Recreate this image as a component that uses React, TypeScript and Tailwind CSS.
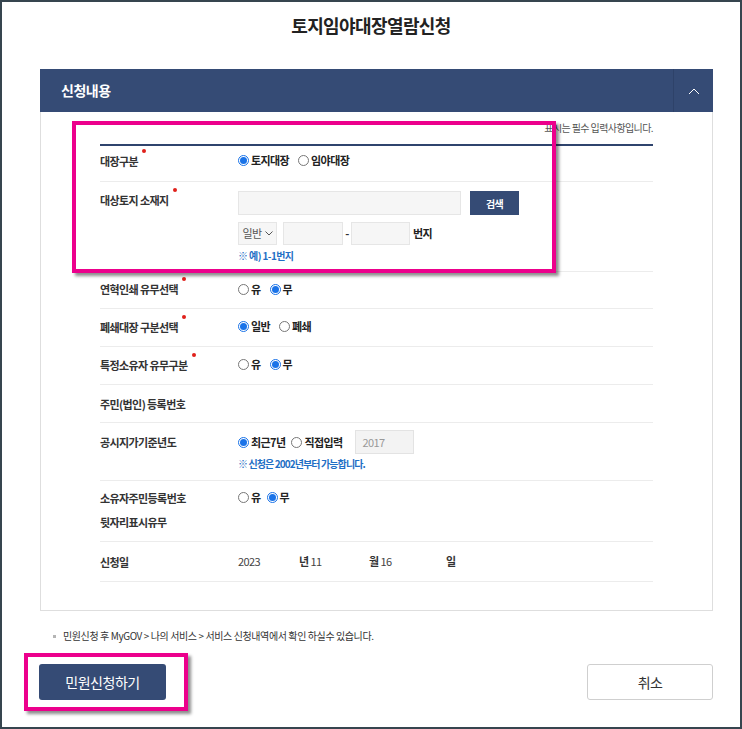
import React from "react";

const navy = "bg-[#354b75]";

function Dot() {
  return <span className="ml-[4px] mt-[-3px] inline-block h-[4px] w-[4px] self-start rounded-full bg-[#e0201b]" />;
}

function Radio({ checked, label }: { checked?: boolean; label: string }) {
  return (
    <span className="flex items-center gap-[2px]">
      {checked ? (
        <span className="flex h-[11px] w-[11px] items-center justify-center rounded-full border border-[#1a73e8] bg-white">
          <span className="h-[7px] w-[7px] rounded-full bg-[#1a73e8]" />
        </span>
      ) : (
        <span className="h-[11px] w-[11px] rounded-full border border-[#777] bg-white" />
      )}
      <span className="font-bold text-[#222]">{label}</span>
    </span>
  );
}

function Label({ children, req }: { children: React.ReactNode; req?: boolean }) {
  return (
    <div className="flex w-[138px] shrink-0 items-start font-bold text-[#333]">
      <span className="leading-[18px]">{children}</span>
      {req && <Dot />}
    </div>
  );
}

export default function App() {
  return (
    <div className="relative h-[729px] w-[742px] overflow-hidden border-2 border-[#36454f] bg-white font-['Noto_Sans_CJK_KR','Noto_Sans',sans-serif] text-[11px] tracking-[-0.6px] text-[#333]">
      {/* title */}
      <h1 className="pt-[12px] text-center text-[18px] font-bold leading-[22px] tracking-[-0.6px] text-[#222]">
        토지임야대장열람신청
      </h1>

      {/* panel */}
      <div className="ml-[38px] mt-[33px] w-[673px]">
        <div className={`flex h-[43px] items-center ${navy}`}>
          <span className="flex-1 pl-[21px] text-[14px] font-bold tracking-[-0.5px] text-white">신청내용</span>
          <span className="flex h-full w-[40px] items-center justify-center border-l border-[#2e4269]">
            <svg width="12" height="8" viewBox="0 0 12 8" fill="none">
              <polyline points="1,7 6,2 11,7" stroke="#fff" strokeWidth="1" />
            </svg>
          </span>
        </div>
        <div className="border-x border-b border-[#dedede] px-[59px] pb-[28px] pt-[10px]">
          <div className="mb-[10px] flex h-[12px] items-center justify-end text-[10px] leading-[12px] tracking-[-0.6px] text-[#555]">
            표시는 필수 입력사항입니다.
          </div>

          <div className="border-t-2 border-[#2f446d]">
            {/* 대장구분 */}
            <div className="flex h-[36px] items-center border-b border-[#ececec] pb-[6px]">
              <Label req>대장구분</Label>
              <div className="flex items-center gap-[9px]">
                <Radio checked label="토지대장" />
                <Radio label="임야대장" />
              </div>
            </div>

            {/* 대상토지 소재지 */}
            <div className="flex h-[90px] items-start border-b border-[#ececec] pt-[9px]">
              <Label req>대상토지 소재지</Label>
              <div className="flex flex-col">
                <div className="flex items-center">
                  <div className="h-[24px] w-[223px] border border-[#e6e6e6] bg-[#f6f6f6]" />
                  <button className={`ml-[9px] h-[24px] w-[49px] text-[10px] font-bold text-white ${navy}`}>검색</button>
                </div>
                <div className="mt-[7px] flex items-center">
                  <div className="flex h-[23px] w-[39px] items-center justify-center gap-[3px] border border-[#e6e6e6] bg-[#f6f6f6] text-[#555]">
                    일반
                    <svg width="8" height="5" viewBox="0 0 8 5" fill="none">
                      <polyline points="0.5,0.5 4,4 7.5,0.5" stroke="#555" strokeWidth="1" />
                    </svg>
                  </div>
                  <div className="ml-[6px] h-[23px] w-[60px] border border-[#e6e6e6] bg-[#f6f6f6]" />
                  <span className="w-[8px] text-center font-bold">-</span>
                  <div className="h-[23px] w-[59px] border border-[#e6e6e6] bg-[#f6f6f6]" />
                  <span className="ml-[3px] font-bold text-[#222]">번지</span>
                </div>
                <div className="mt-[4px] text-[10px] font-bold leading-[14px] text-[#1f6fc5]">※ 예) 1-1번지</div>
              </div>
            </div>

            {/* 연혁인쇄 */}
            <div className="flex h-[37px] items-center border-b border-[#ececec] pb-[2px]">
              <Label req>연혁인쇄 유무선택</Label>
              <div className="flex items-center gap-[9px]">
                <Radio label="유" />
                <Radio checked label="무" />
              </div>
            </div>

            {/* 폐쇄대장 */}
            <div className="flex h-[38px] items-center border-b border-[#ececec] pb-[2px]">
              <Label req>폐쇄대장 구분선택</Label>
              <div className="flex items-center gap-[9px]">
                <Radio checked label="일반" />
                <Radio label="폐쇄" />
              </div>
            </div>

            {/* 특정소유자 */}
            <div className="flex h-[38px] items-center border-b border-[#ececec] pb-[2px]">
              <Label req>특정소유자 유무구분</Label>
              <div className="flex items-center gap-[9px]">
                <Radio label="유" />
                <Radio checked label="무" />
              </div>
            </div>

            {/* 주민 등록번호 */}
            <div className="flex h-[38px] items-center border-b border-[#ececec]">
              <Label>주민(법인) 등록번호</Label>
            </div>

            {/* 공시지가 */}
            <div className="flex h-[58px] items-start border-b border-[#ececec] pt-[7px]">
              <div className="pt-[3px]">
                <Label>공시지가기준년도</Label>
              </div>
              <div className="flex flex-col">
                <div className="flex h-[24px] items-center">
                  <Radio checked label="최근7년" />
                  <span className="ml-[6px]">
                    <Radio label="직접입력" />
                  </span>
                  <div className="ml-[12px] flex h-[24px] w-[59px] items-center border border-[#e3e3e3] bg-[#f3f3f3] pl-[7px] text-[11px] text-[#999]">
                    2017
                  </div>
                </div>
                <div className="mt-[3px] text-[10px] font-bold leading-[14px] tracking-[-0.9px] text-[#1f6fc5]">
                  ※ 신청은 2002년부터 가능합니다.
                </div>
              </div>
            </div>

            {/* 소유자주민등록번호 */}
            <div className="flex h-[61px] items-start border-b border-[#ececec]">
              <div className="w-[138px] shrink-0 pt-[5px] font-bold leading-[24px] text-[#333]">
                소유자주민등록번호
                <br />
                뒷자리표시유무
              </div>
              <div className="flex items-center gap-[6px] pt-[7px] leading-[18px]">
                <Radio label="유" />
                <Radio checked label="무" />
              </div>
            </div>

            {/* 신청일 */}
            <div className="flex h-[40px] items-center border-b border-[#ececec]">
              <Label>신청일</Label>
              <div className="flex items-center text-[#444]">
                <span className="w-[61px]">2023</span>
                <span className="w-[70px]">
                  <b className="mr-[2px] text-[#333]">년</b>11
                </span>
                <span className="w-[77px]">
                  <b className="mr-[2px] text-[#333]">월</b>16
                </span>
                <b className="text-[#333]">일</b>
              </div>
            </div>
          </div>
        </div>
      </div>

      {/* note */}
      <div className="ml-[51px] mt-[18px] flex items-center text-[10px] leading-[14px] tracking-[-0.4px] text-[#333]">
        <span className="mr-[7px] inline-block h-[3px] w-[3px] bg-[#b5b5b5]" />
        민원신청 후 MyGOV &gt; 나의 서비스 &gt; 서비스 신청내역에서 확인 하실수 있습니다.
      </div>

      {/* buttons */}
      <div className="ml-[37px] mt-[21px] flex w-[674px] items-center justify-between">
        <button className={`h-[36px] w-[127px] rounded-[3px] text-[14px] tracking-[-0.5px] text-white ${navy}`}>민원신청하기</button>
        <button className="h-[36px] w-[126px] rounded-[3px] border border-[#cfcfcf] bg-white text-[14px] text-[#333]">취소</button>
      </div>

      {/* highlight boxes */}
      <div className="absolute left-[70px] top-[119px] h-[152px] w-[484px] border-[4px] border-[#ec008c] shadow-[3px_3px_3px_rgba(0,0,0,0.45)]" />
      <div className="absolute left-[22px] top-[651px] h-[58px] w-[164px] border-[4px] border-[#ec008c] shadow-[3px_3px_3px_rgba(0,0,0,0.45)]" />
    </div>
  );
}
